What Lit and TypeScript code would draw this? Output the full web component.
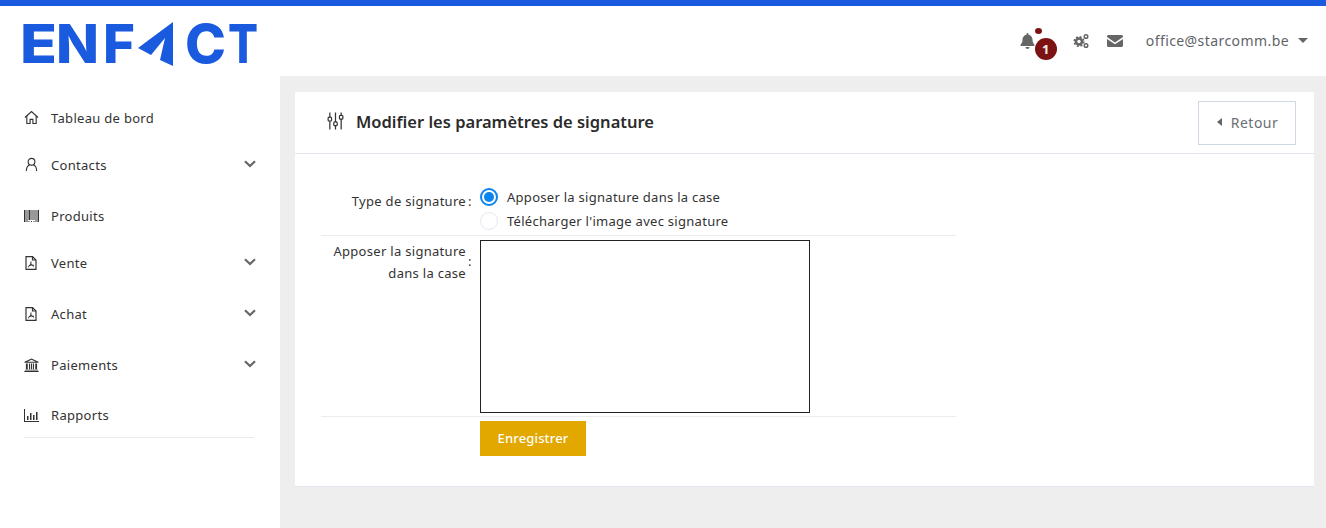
import { LitElement, html, css, svg } from "lit";
import { customElement } from "lit/decorators.js";

const pdf = html`<svg viewBox="0 0 14 16" width="14" height="16" fill="none" stroke="#333" stroke-width="1.2"><path d="M2 1.6h6.5L12 5v9.4H2z"/><path d="M8.5 1.6V5H12"/><path d="M7 6.5c.2 2.5-1.3 5-3 5.6M7 8.5c.6 1.5 1.6 2.4 3 2.7M4.8 10.6c1.500-.6 3-.7 5-.4" stroke-width="1"/></svg>`;
const chev = html`<svg class="chev" viewBox="0 0 12 8" width="12" height="8" fill="none" stroke="#666" stroke-width="2.200"><path d="M1 1.300l5 4.700 5-4.700"/></svg>`;

const items = [
  { label: "Tableau de bord", h: 47, pb: 0, pt: 0, sub: false, icon: html`<svg viewBox="0 0 16 16" width="15" height="15" fill="none" stroke="#333" stroke-width="1.200"><path d="M1 8l7-6.300L15 8"/><path d="M3 6.500V14.400h3.500V10h3v4.400H13V6.500"/></svg>` },
  { label: "Contacts", h: 51, pb: 4, pt: 0, sub: true, icon: html`<svg viewBox="0 0 16 16" width="15" height="15" fill="none" stroke="#333" stroke-width="1.200"><circle cx="8" cy="5" r="3.600"/><path d="M2.500 15c0-3.500 1.800-6 3.500-6.500M13.500 15c0-3.500-1.800-6-3.500-6.500"/></svg>` },
  { label: "Produits", h: 47, pb: 0, pt: 0, sub: false, icon: html`<svg viewBox="0 0 15 12" width="15" height="12" fill="#333"><path d="M0 0h1.500v12H0zM2.500 0h1v12h-1zM4.500 0h2v10h-2zM7.500 0h1v10h-1zM9.500 0h1v10h-1zM11.500 0h1v12h-1zM13.500 0h1.500v12h-1.500z"/><path d="M4.500 11h1v1h-1zM7 11h1v1H7zM9.500 11h1v1h-1z"/></svg>` },
  { label: "Vente", h: 51, pb: 4, pt: 0, sub: true, icon: pdf },
  { label: "Achat", h: 51, pb: 4, pt: 0, sub: true, icon: pdf },
  { label: "Paiements", h: 50, pb: 2, pt: 0, sub: true, icon: html`<svg viewBox="0 0 16 15" width="15" height="14" fill="#333"><path d="M8 .5L15.500 4v1H.5V4zM8 1.800L3.500 3.900h9z" fill-rule="evenodd"/><path d="M2 6h2v6H2zM5.300 6h1.200v6H5.300zM7.400 6h1.200v6H7.400zM9.500 6h1.200v6H9.500zM12 6h2v6h-2zM1 12.500h14v1H1zM.3 14h15.400v1H.3z"/></svg>` },
  { label: "Rapports", h: 46, pb: 0, pt: 2, sub: false, icon: html`<svg viewBox="0 0 15 13" width="15" height="13" fill="#333"><path d="M0 0h1v12h14v1H0z"/><path d="M3 7h1.500v4H3zM6 4h1.500v7H6zM9 6h1.500v5H9zM12 3h1.500v8H12z"/></svg>` },
];

@customElement("app-root")
export class AppRoot extends LitElement {
  static styles = css`
    :host { display: block; width: 1326px; height: 528px; overflow: hidden; background: #eee; font-family: "Noto Sans", "Open Sans", sans-serif; color: #333; }
    * { box-sizing: border-box; }
    .topline { height: 6px; background: #1a5adf; }
    .header { height: 70px; background: #fff; display: flex; align-items: center; justify-content: space-between; }
    .logo { display: block; margin-left: 23px; overflow: visible; }
    .logo text { font-family: Inter, sans-serif; font-weight: 800; font-size: 54px; fill: #1a5adf; }
    .tools { display: flex; align-items: center; padding-right: 18px; margin-top: -1px; color: #666; }
    .bell { position: relative; width: 16px; height: 16px; margin-right: 37px; }
    .bell svg { display: block; }
    .dot { position: absolute; left: 15px; top: -5px; width: 7px; height: 6px; border-radius: 50%; background: #7d1212; }
    .badge { position: absolute; left: 15px; top: 5px; width: 22px; height: 22px; border-radius: 50%; background: #7d1212; color: #eee; font-size: 13px; font-weight: 700; display: flex; align-items: center; justify-content: center; }
    .cogs { margin-right: 17px; display: block; }
    .mail { margin-right: 23px; display: block; }
    .email { font-size: 14px; color: #5f6368; letter-spacing: 0.42px; }
    .caret { margin-left: 9px; width: 0; height: 0; border: 5px solid transparent; border-top: 5px solid #666; border-bottom: 0; }
    .main { display: flex; height: 452px; }
    .side { width: 280px; background: #fff; padding: 18px 24px 0; flex: none; }
    .item { display: flex; align-items: center; font-size: 13px; color: #333; letter-spacing: 0.3px; margin-right: -1px; }
    .ico { width: 27px; flex: none; display: flex; align-items: center; }
    .ico svg { display: block; }
    .lbl { flex: 1; }
    .chev { margin: -2px 1px 0 0; }
    .sep { border-top: 1px solid #ebebeb; width: 230px; }
    .content { flex: 1; padding: 16px 12px 0 15px; }
    .card { height: 395px; background: #fff; border-bottom: 1px solid #e4e8ee; }
    .card-head { height: 62px; border-bottom: 1px solid #e4e6ed; display: flex; align-items: center; padding: 0 18px 0 32px; }
    .card-head svg { display: block; margin-right: 12px; margin-top: -4px; }
    h1 { flex: 1; margin: 0; padding-bottom: 2px; font-size: 16.5px; font-weight: 600; color: #2b2b2b; }
    .back { width: 98px; height: 44px; border: 1px solid #cfd6e4; background: #fff; color: #6b6f75; font: 14px "Noto Sans", sans-serif; letter-spacing: 0.5px; display: flex; align-items: center; justify-content: center; gap: 9px; padding: 0 0 2px 1px; margin-top: 1px; }
    .back i { width: 0; height: 0; border: 4px solid transparent; border-right: 5px solid #666; border-left: 0; }
    form { width: 635px; margin: 26px 0 0 26px; font-size: 13px; color: #333; }
    .row { display: grid; grid-template-columns: 145px 14px 1fr; border-bottom: 1px solid #ececec; }
    .row.r1 { height: 56px; }
    .row.r2 { height: 181px; padding-top: 4px; }
    .row.r3 { border: 0; padding-top: 4px; }
    .lab { text-align: right; line-height: 21.500px; letter-spacing: 0.3px; }
    .r1 .lab { padding-top: 11px; }
    .r2 .lab { padding-top: 1px; }
    .colon { padding-left: 2px; line-height: 21px; }
    .r1 .colon { padding-top: 11px; }
    .r2 .colon { padding-top: 11px; }
    .opts { display: flex; flex-direction: column; padding-top: 5px; }
    .opt { display: flex; align-items: center; height: 24px; letter-spacing: 0.28px; }
    .radio { width: 18px; height: 18px; border-radius: 50%; border: 1px solid #e4e8f0; margin-right: 9px; flex: none; background: #fff; }
    .radio.on { border-color: #0a84ee; border-width: 2px; display: flex; align-items: center; justify-content: center; }
    .radio.on::after { content: ""; width: 10px; height: 10px; border-radius: 50%; background: #0a84ee; }
    .pad { width: 330px; height: 173px; border: 1px solid #222; background: #fff; }
    .save { width: 106px; height: 35px; border: 0; background: #e2a800; color: #fff; font: 500 13px "Noto Sans", sans-serif; letter-spacing: 0.15px; padding: 0 0 2px; }
  `;

  render() {
    return html`
      <div class="topline"></div>
      <div class="header">
        <svg class="logo" width="240" height="70" viewBox="0 0 240 70" role="img" aria-label="ENFACT">
          <text x="-3" y="57" textLength="37" lengthAdjust="spacingAndGlyphs">E</text>
          <text x="33" y="57" textLength="43" lengthAdjust="spacingAndGlyphs">N</text>
          <text x="80" y="57" textLength="32" lengthAdjust="spacingAndGlyphs">F</text>
          ${svg`<path d="M115 42L150 16V60L137 54L142 32L128 49z" fill="#1a5adf"/>`}
          <text x="162" y="57" textLength="41" lengthAdjust="spacingAndGlyphs">C</text>
          <text x="205" y="57" textLength="30" lengthAdjust="spacingAndGlyphs">T</text>
        </svg>
        <div class="tools">
          <div class="bell">
            <svg viewBox="0 0 448 512" width="15" height="16" fill="#666"><path d="M224 512c35 0 64-29 64-64H160c0 35 29 64 64 64zm215-150c-19-21-55-52-55-154 0-78-54-140-128-155V32a32 32 0 1 0-64 0v21C118 68 64 130 64 208c0 102-36 133-55 154-6 6-9 14-9 22 0 16 13 32 32 32h384c19 0 32-16 32-32 0-8-3-16-9-22z"/></svg>
            <span class="dot"></span><span class="badge">1</span>
          </div>
          <svg class="cogs" viewBox="0 0 17 16" width="17" height="16" fill="none" stroke="#666"><circle cx="6" cy="8.500" r="3" stroke-width="2.600"/><circle cx="6" cy="8.500" r="4.700" stroke-width="1.600" stroke-dasharray="2 1.700"/><circle cx="13" cy="3.500" r="1.800" stroke-width="1.500"/><circle cx="13" cy="12.500" r="1.800" stroke-width="1.500"/></svg>
          <svg class="mail" viewBox="0 0 16 12" width="16" height="12" fill="#666"><path d="M0 1.500C0 .7.700 0 1.500 0h13c.8 0 1.500.7 1.500 1.500v.6L8 7.500 0 2.100zM0 3.900l8 5.300 8-5.300v6.600c0 .8-.7 1.500-1.500 1.500h-13C.7 12 0 11.300 0 10.500z"/></svg>
          <span class="email">office@starcomm.be</span><span class="caret"></span>
        </div>
      </div>
      <div class="main">
        <nav class="side">
          ${items.map((it) => html`<div class="item" style="height:${it.h}px;padding-bottom:${it.pb}px;padding-top:${it.pt}px"><span class="ico">${it.icon}</span><span class="lbl">${it.label}</span>${it.sub ? chev : ""}</div>`)}
          <div class="sep"></div>
        </nav>
        <div class="content">
          <div class="card">
            <div class="card-head">
              <svg viewBox="0 0 18 20" width="17" height="20" fill="none" stroke="#333" stroke-width="1.300"><path d="M3 1v5M3 10v9M9 1v10M9 15v4M15 1v3M15 8v11"/><rect x="1.200" y="6" width="3.600" height="4" rx="1"/><rect x="7.200" y="11" width="3.600" height="4" rx="1"/><rect x="13.200" y="4" width="3.600" height="4" rx="1"/></svg>
              <h1>Modifier les paramètres de signature</h1>
              <button class="back" type="button"><i></i>Retour</button>
            </div>
            <form>
              <div class="row r1">
                <div class="lab">Type de signature</div><div class="colon">:</div>
                <div class="opts">
                  <label class="opt"><span class="radio on"></span>Apposer la signature dans la case</label>
                  <label class="opt"><span class="radio"></span>Télécharger l'image avec signature</label>
                </div>
              </div>
              <div class="row r2">
                <div class="lab">Apposer la signature dans la case</div><div class="colon">:</div>
                <div class="pad"></div>
              </div>
              <div class="row r3">
                <div></div><div></div>
                <div><button class="save" type="button">Enregistrer</button></div>
              </div>
            </form>
          </div>
        </div>
      </div>
    `;
  }
}
